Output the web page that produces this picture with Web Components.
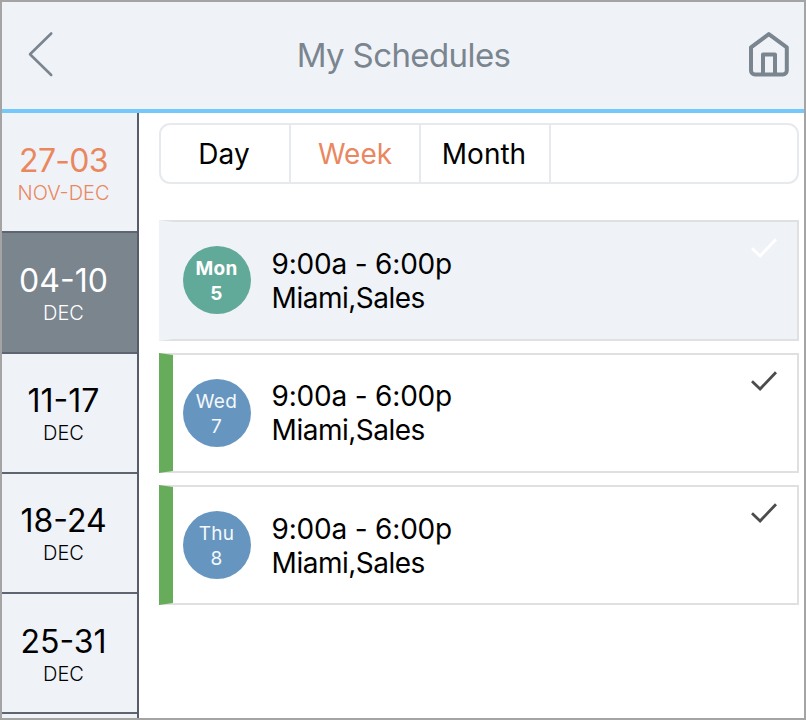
<!DOCTYPE html>
<html lang="en">
<head>
<meta charset="utf-8">
<title>My Schedules</title>
<style>
html, body { margin: 0; height: 100%; }
body { font-family: Inter, Roboto, "Liberation Sans", sans-serif; color: #000; background: #fff; overflow: hidden; }
</style>
</head>
<body>
<schedule-app>
  <app-header slot="header">My Schedules</app-header>
  <week-item slot="weeks" month="NOV-DEC" current>27-03</week-item>
  <week-item slot="weeks" month="DEC" selected>04-10</week-item>
  <week-item slot="weeks" month="DEC">11-17</week-item>
  <week-item slot="weeks" month="DEC">18-24</week-item>
  <week-item slot="weeks" month="DEC">25-31</week-item>
  <week-item slot="weeks" month=""></week-item>
  <view-tabs>
    <view-tab>Day</view-tab>
    <view-tab active>Week</view-tab>
    <view-tab>Month</view-tab>
  </view-tabs>
  <shift-card day="Mon" date="5" today><span>9:00a - 6:00p</span><span slot="place">Miami,Sales</span></shift-card>
  <shift-card day="Wed" date="7"><span>9:00a - 6:00p</span><span slot="place">Miami,Sales</span></shift-card>
  <shift-card day="Thu" date="8"><span>9:00a - 6:00p</span><span slot="place">Miami,Sales</span></shift-card>
</schedule-app>

<script>
// shared: clone a template string into an open shadow root
class BaseElement extends HTMLElement {
  constructor() {
    super();
    const template = document.createElement('template');
    template.innerHTML = this.constructor.html;
    this.attachShadow({mode: 'open'}).append(template.content.cloneNode(true));
  }
}

class ScheduleApp extends BaseElement {
  static html = `
<style>
:host { display: flex; flex-direction: column; box-sizing: border-box; width: 806px; height: 720px;
  border: 2px solid #a4a4a4; overflow: hidden; }
.body { display: flex; flex: 1; min-height: 0; }
nav { box-sizing: border-box; flex: none; width: 137px; border-right: 2px solid #575c69; overflow: hidden; background: #eff3f8; }
main { display: flex; flex-direction: column; flex: 1; padding: 10px 5px 0 20px; }
</style>
<slot name="header"></slot>
<div class="body">
  <nav><slot name="weeks"></slot></nav>
  <main><slot></slot></main>
</div>`;
}

class AppHeader extends BaseElement {
  static html = `
<style>
:host { display: flex; flex: none; align-items: center; justify-content: space-between; box-sizing: border-box;
  height: 111px; padding: 0 13px 3px 22px; background: #eff3f8; border-bottom: 4px solid #75c8fa; color: #7a858f; }
svg { display: block; fill: none; stroke: currentColor; }
h1 { margin: 1px 0 0; font-size: 33px; font-weight: 400; line-height: 40px; letter-spacing: -.6px; }
</style>
<svg width="36" height="50" viewBox="0 0 36 50" stroke-width="2.6" stroke-linecap="round" stroke-linejoin="round">
  <path d="M27.2 4.5 6 25.2 27.2 46"/>
</svg>
<h1><slot></slot></h1>
<svg width="44" height="50" viewBox="0 0 44 50" stroke-width="4" stroke-linejoin="round">
  <path d="M4 18.3 21.8 5.1 39.8 18.3V41.5a4 4 0 0 1-4 4H8a4 4 0 0 1-4-4Z"/>
  <path d="M16 45V25.5H28V45"/>
</svg>`;
}

class WeekItem extends BaseElement {
  static html = `
<style>
:host { display: flex; flex-direction: column; align-items: center; box-sizing: border-box; height: 120.3px;
  padding: 27.6px 12px 0 0; border-bottom: 2px solid #5f6471; background: #eff3f8; }
:host([selected]) { background: #7a858e; color: #fff; }
:host([current]) { color: #ea875f; }
:host([current]) .range { letter-spacing: -.7px; }
.range { font-size: 32px; line-height: 40px; }
.month { font-size: 20px; font-weight: 300; line-height: 24px; }
</style>
<div class="range"><slot></slot></div>
<div class="month"></div>`;
  connectedCallback() {
    this.shadowRoot.querySelector('.month').textContent = this.getAttribute('month');
  }
}

class ViewTabs extends BaseElement {
  static html = `
<style>
:host { display: flex; box-sizing: border-box; flex: none; height: 61px; border: 2px solid #e6eaee; border-radius: 11px; }
</style>
<slot></slot>`;
}

class ViewTab extends BaseElement {
  static html = `
<style>
:host { display: flex; justify-content: center; box-sizing: border-box; width: 130px; padding: 11px 2px 0 0;
  border-right: 2px solid #e6e9ed; font-size: 28px; line-height: 36px; }
:host([active]) { color: #ea875f; padding-right: 0; }
</style>
<slot></slot>`;
}

class ShiftCard extends BaseElement {
  static html = `
<style>
:host { display: flex; align-items: flex-start; box-sizing: border-box; flex: none; height: 120.3px; margin-bottom: 12px;
  padding: 24px 19px 0 10px; border: 2px solid #e0e0e0; border-left: 14px solid #67ac5b; background: #fff; }
:host([today]) { margin-top: 36.4px; background: #eff3f8; border-left-color: #eff3f8; }
.badge { display: flex; flex-direction: column; align-items: center; box-sizing: border-box; flex: none; width: 68px; height: 68px;
  padding: 10px 1px 0 0; border-radius: 50%; background: #6696bf; color: #f4f8fb; font-size: 19px; line-height: 25px; letter-spacing: .3px; }
:host([today]) .badge { background: #61a999; color: #fff; font-weight: 700; }
.info { display: flex; flex-direction: column; flex: 1; margin: .6px 0 0 20.6px; font-size: 28px; line-height: 34px; letter-spacing: -.2px; }
::slotted([slot="place"]) { letter-spacing: -.5px; }
svg { display: block; fill: none; stroke: #4c4c4c; stroke-width: 2.8; margin-top: -9px; }
:host([today]) svg { stroke: #fff; }
</style>
<div class="badge"><span class="day"></span><span class="date"></span></div>
<div class="info"><slot></slot><slot name="place"></slot></div>
<svg width="28" height="24" viewBox="0 0 28 24"><path d="M2 11.3 10.1 19 26 2.2"/></svg>`;
  connectedCallback() {
    this.shadowRoot.querySelector('.day').textContent = this.getAttribute('day');
    this.shadowRoot.querySelector('.date').textContent = this.getAttribute('date');
  }
}

customElements.define('schedule-app', ScheduleApp);
customElements.define('app-header', AppHeader);
customElements.define('week-item', WeekItem);
customElements.define('view-tabs', ViewTabs);
customElements.define('view-tab', ViewTab);
customElements.define('shift-card', ShiftCard);
</script>
</body>
</html>
